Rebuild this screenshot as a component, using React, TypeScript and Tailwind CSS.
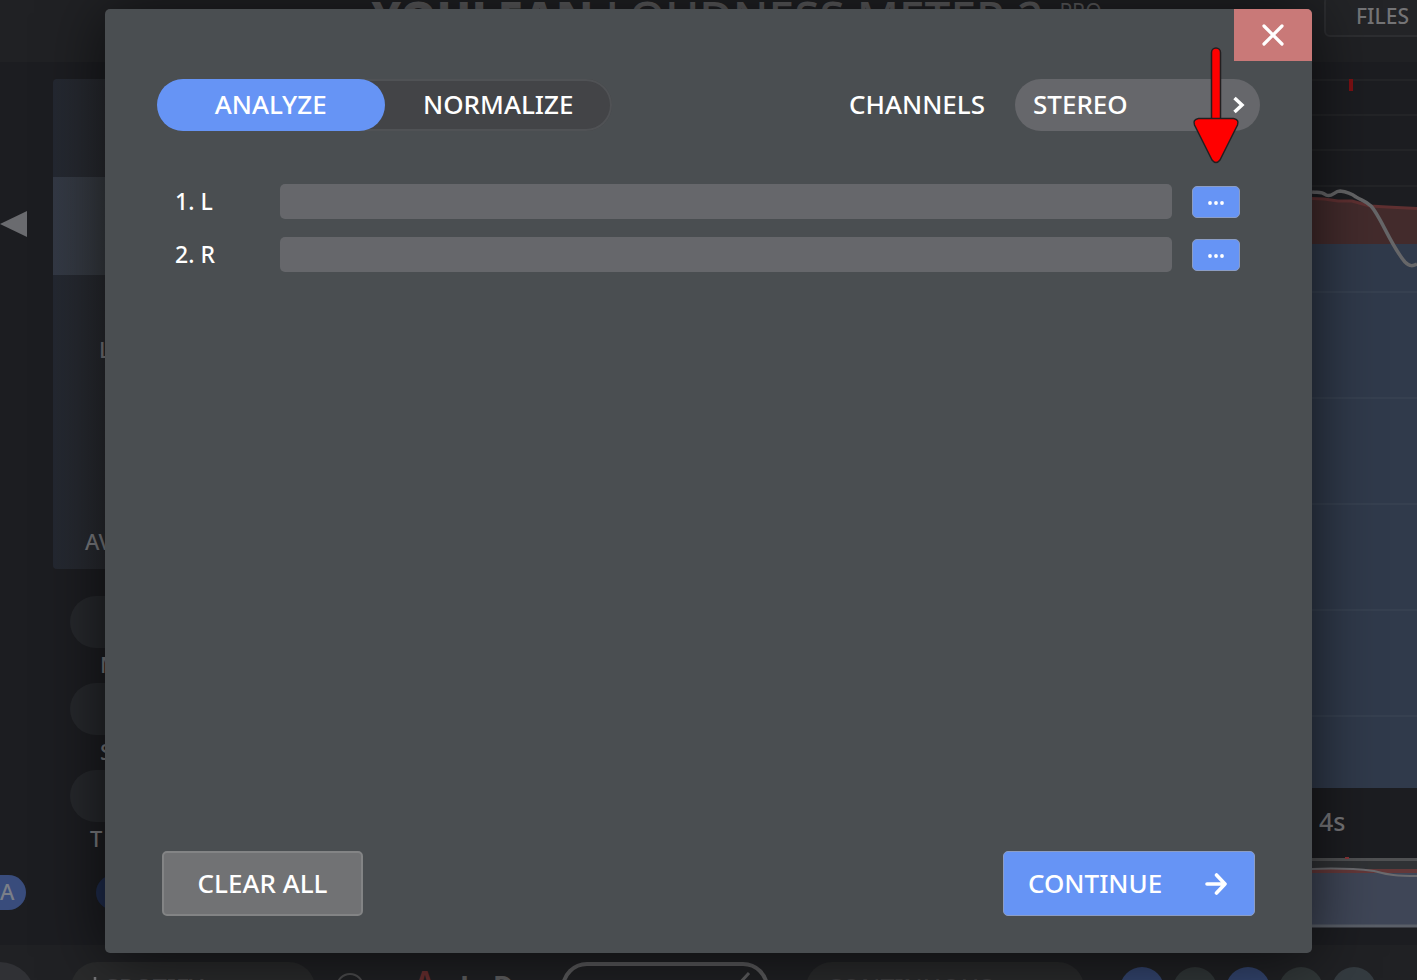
import { useState } from "react";

const CHANNEL_ROWS = [
  { id: "left", label: "1. L" },
  { id: "right", label: "2. R" },
];

const METERS = ["M", "S", "T"];

const FOOTER_DOTS = [
  { id: "a", tone: "bg-[#33456f]" },
  { id: "b", tone: "bg-[#313738]" },
  { id: "c", tone: "bg-[#33456f]" },
  { id: "d", tone: "bg-[#313738]" },
  { id: "e", tone: "bg-[#343b40]" },
];

function AppHeader() {
  return (
    <header className="relative flex h-[62px] shrink-0 justify-center overflow-hidden bg-[#202124]">
      <h1 className="-mt-[11px] flex items-start gap-4 whitespace-nowrap pl-14 text-[46px] leading-[56px] font-medium text-[#5c5c5e]">
        <span>
          <b className="font-extrabold">YOULEAN</b> LOUDNESS METER 2
        </span>
        <span className="mt-3 text-[21px] leading-5 font-normal">PRO</span>
      </h1>
      <button
        type="button"
        className="absolute -right-4 -top-1 h-[41px] w-[109px] rounded-md border-2 border-[#2d2e31] bg-[#232427] pl-[30px] text-left text-[21px] font-medium text-[#747476]"
      >
        FILES
      </button>
    </header>
  );
}

function Sidebar() {
  return (
    <aside className="flex w-[105px] shrink-0 flex-col overflow-hidden text-[22px] font-medium text-[#7c7d81]">
      <div className="flex pt-[17px]">
        <button type="button" aria-label="Collapse" className="mt-[131px] h-7 w-[53px] shrink-0">
          <svg viewBox="0 0 53 28" className="h-7 w-[53px] fill-[#6a6b6f]">
            <path d="M0 14 27 1v26z" />
          </svg>
        </button>
        <div className="h-[490px] w-[52px] shrink-0 rounded-l bg-linear-to-r from-[#242831] to-[#282a2f] pt-[98px]">
          <div className="h-[98px] bg-linear-to-r from-[#333945] to-[#373b41]" />
          <div className="mt-[58px] h-8 pl-[46px] leading-8">L</div>
          <div className="mt-40 h-8 pl-8 leading-8">AV</div>
        </div>
      </div>
      <div className="pl-[70px] pt-[27px]">
        {METERS.map((name) => (
          <div key={name}>
            <div className="h-[52px] w-40 rounded-full bg-[#26282c]" />
            <div className={name === "T" ? "h-[35px] pl-5 leading-[33px]" : "h-[35px] pl-[30px] leading-[33px]"}>
              {name}
            </div>
          </div>
        ))}
      </div>
      <div className="mt-[18px] flex gap-[70px]">
        <div className="h-[35px] w-[26px] shrink-0 rounded-r-full bg-[#394c7c] text-[22px] leading-[33px] text-[#7b7f88]">A</div>
        <div className="h-[35px] w-20 shrink-0 rounded-full bg-[#1f2c4d]" />
      </div>
    </aside>
  );
}

function History() {
  return (
    <section className="flex w-[105px] shrink-0 flex-col overflow-hidden">
      <svg viewBox="0 0 105 726" className="h-[726px] w-[105px] shrink-0" fill="none">
        <path d="M0 136 12 137 26 139 40 139 58 144 75 145 105 146V182H0z" fill="#432b2c" />
        <path d="M0 182h105v544H0z" fill="#303a4b" />
        <path
          d="M0 18h105M0 53h105M0 88h105M0 124h105M0 230h105M0 336h105M0 442h105M0 548h105M0 654h105"
          stroke="#ffffff"
          strokeOpacity=".03"
          strokeWidth="2"
        />
        <path d="M0 136.500 12 137 26 139 40 139 58 144 75 145 105 146.500" stroke="#5f3031" strokeWidth="3" />
        <path d="M39 17v12" stroke="#7d1013" strokeWidth="4" />
        <path
          d="M0 130C5 131 9 129 14 133C20 136 22 129 28 129C36 130 40 132 44 135C51 139 54 139 59 144C69 155 79 184 93 200C98 205 101 204 105 202"
          stroke="#666668"
          strokeWidth="3.500"
        />
      </svg>
      <div className="h-[69px] shrink-0 pl-[7px] text-[25px] leading-[67px] font-medium text-[#77777a]">4s</div>
      <svg viewBox="0 0 105 72" className="h-[72px] w-[105px] shrink-0" fill="none">
        <path d="M0 2h105v68H0z" fill="#303235" />
        <path d="M0 12h105v5H0z" fill="#643839" />
        <path d="M0 16h105v54H0z" fill="#3f4657" />
        <path d="M0 2.500h105" stroke="#505153" strokeWidth="3" />
        <path d="M0 69h105" stroke="#5a5f68" strokeWidth="3" />
        <path d="M33 1h4" stroke="#873438" strokeWidth="2" />
        <path d="M0 12C25 11 45 12 62 14C76 18 85 19 105 19" stroke="#6b6b6f" strokeWidth="2" />
      </svg>
    </section>
  );
}

function AppFooter() {
  return (
    <footer className="flex h-[35px] shrink-0 items-start overflow-hidden bg-[#202124] pt-[17px] whitespace-nowrap">
      <div className="h-[52px] w-[35px] shrink-0 rounded-tr-full bg-[#303135]" />
      <div className="ml-9 flex h-[52px] w-[244px] shrink-0 items-start gap-1 rounded-full bg-[#2a2b2c] pl-[18px] pt-[7px] text-[25px] leading-9 font-medium text-[#454547]">
        <svg viewBox="0 0 12 20" className="mt-2 h-5 w-3" fill="none" stroke="#77777a" strokeWidth="2.500">
          <path d="M6 0v18M1 13l5 5 5-5" />
        </svg>
        SPOTIFY
      </div>
      <div className="ml-[21px] mt-[11px] size-7 shrink-0 rounded-full border-2 border-[#4c4c4e]" />
      <div className="ml-[51px] mt-[3px] w-[22px] shrink-0 text-[28px] leading-8 font-bold text-[#6a2f30]">A</div>
      <div className="ml-[23px] mt-2 w-[33px] shrink-0 text-[28px] leading-8 font-bold text-[#5f5f61]">L</div>
      <div className="mt-2 w-6 shrink-0 text-[28px] leading-8 font-bold text-[#5f5f61]">D</div>
      <div className="ml-11 flex h-[52px] w-[208px] shrink-0 justify-end rounded-full border-4 border-[#5c5c5e] pr-3.5 pt-1.5">
        <svg viewBox="0 0 14 28" className="h-7 w-3.5" fill="none" stroke="#5f5f61" strokeWidth="3">
          <path d="M12 1 1 13 12 25" />
        </svg>
      </div>
      <div className="ml-[37px] h-[52px] w-[278px] shrink-0 rounded-full bg-[#2a2b2c] pl-5 pt-[7px] text-[25px] leading-9 font-medium text-[#3f3f41]">
        CONTINUOUS
      </div>
      <div className="ml-9 mt-[5px] flex shrink-0 gap-[9px]">
        {FOOTER_DOTS.map((dot) => (
          <div key={dot.id} className={`size-11 rounded-full ${dot.tone}`} />
        ))}
      </div>
    </footer>
  );
}

function PointerArrow() {
  return (
    <svg
      viewBox="0 0 48 120"
      className="pointer-events-none absolute right-[72px] top-9 h-[120px] w-12"
      fill="#ff0000"
      stroke="#231f20"
      strokeWidth="1.5"
      strokeLinejoin="round"
      aria-hidden="true"
    >
      <path d="M19.500 76V7.500a4.500 4.500 0 0 1 9 0V76z" />
      <path d="M6.500 73.500h35q6 1 4 6.500L28 115q-4 5-8 0L2.500 80q-2-5.500 4-6.500z" />
    </svg>
  );
}

function FilesDialog() {
  const [mode, setMode] = useState("analyze");
  const tab = "h-[52px] flex-1 rounded-full pb-px";

  return (
    <div
      role="dialog"
      aria-modal="true"
      aria-label="Files"
      className="relative flex flex-1 flex-col rounded-[5px] bg-[#4a4e51] text-[26px] font-medium text-white shadow-[0_4px_65px_rgba(0,0,0,0.65)]"
    >
      <div className="flex justify-end">
        <button
          type="button"
          aria-label="Close"
          className="flex h-[52px] w-[78px] items-center justify-center rounded-tr-[5px] bg-[#c97978]"
        >
          <svg viewBox="0 0 22 22" className="size-[22px]" stroke="#fff" strokeWidth="3.200" strokeLinecap="round">
            <path d="M2 2 20 20M20 2 2 20" />
          </svg>
        </button>
      </div>

      <div className="mt-[18px] flex items-center justify-between px-[52px]">
        <div className="flex w-[455px] rounded-full bg-[#434447] shadow-[inset_0_0_0_2px_#505255]">
          <button type="button" onClick={() => setMode("analyze")} className={mode === "analyze" ? `${tab} bg-[#6694f5]` : tab}>
            ANALYZE
          </button>
          <button type="button" onClick={() => setMode("normalize")} className={mode === "normalize" ? `${tab} bg-[#6694f5]` : tab}>
            NORMALIZE
          </button>
        </div>
        <div className="flex items-center gap-[30px]">
          <label htmlFor="channels" className="pb-px">
            CHANNELS
          </label>
          <div className="relative">
            <select id="channels" className="block h-[52px] w-[245px] appearance-none rounded-full bg-[#66676b] pb-px pl-[18px]">
              <option>STEREO</option>
            </select>
            <svg
              viewBox="0 0 12 18"
              className="pointer-events-none absolute right-[15px] top-[17px] h-[18px] w-3"
              fill="none"
              stroke="#fff"
              strokeWidth="3.500"
            >
              <path d="M1.500 2 9 9 1.500 16" />
            </svg>
          </div>
        </div>
      </div>

      <div className="mt-[53px] flex flex-1 flex-col gap-[18px] pl-[70px] pr-[72px] text-[23px]">
        {CHANNEL_ROWS.map((row) => (
          <div key={row.id} className="flex h-[35px] items-center">
            <label htmlFor={row.id} className="w-[105px]">
              {row.label}
            </label>
            <input id={row.id} type="text" className="h-[35px] min-w-0 flex-1 rounded-[5px] bg-[#66676b] px-3 text-lg" />
            <button
              type="button"
              aria-label={`Browse ${row.label}`}
              className="ml-5 flex h-8 w-12 items-center justify-center rounded-[5px] border border-[#8c9dc4] bg-[#6694f5]"
            >
              <svg viewBox="0 0 16 4" className="mt-0.5 h-1 w-4" fill="#fff">
                <circle cx="2" cy="2" r="1.900" />
                <circle cx="8" cy="2" r="1.900" />
                <circle cx="14" cy="2" r="1.900" />
              </svg>
            </button>
          </div>
        ))}
      </div>

      <div className="flex justify-between px-[57px] pb-[37px]">
        <button type="button" className="h-[65px] w-[201px] rounded-[5px] border-2 border-[#838485] bg-[#717274]">
          CLEAR ALL
        </button>
        <button
          type="button"
          className="flex h-[65px] w-[252px] items-center justify-between rounded-[5px] border border-[#8c9dc4] bg-[#6694f5] pl-6 pr-[27px]"
        >
          CONTINUE
          <svg
            viewBox="0 0 22 22"
            className="size-[22px]"
            fill="none"
            stroke="#fff"
            strokeWidth="3.600"
            strokeLinecap="round"
            strokeLinejoin="round"
          >
            <path d="M2 11H20M11.500 2 20 11 11.500 20" />
          </svg>
        </button>
      </div>

      <PointerArrow />
    </div>
  );
}

export default function App() {
  return (
    <div className="relative flex min-h-screen flex-col overflow-hidden bg-[#1c1d21] font-['Noto_Sans',sans-serif]">
      <AppHeader />
      <main className="flex flex-1 justify-between">
        <Sidebar />
        <History />
      </main>
      <AppFooter />
      <div className="absolute inset-0 flex px-[105px] pb-[27px] pt-[9px]">
        <FilesDialog />
      </div>
    </div>
  );
}
